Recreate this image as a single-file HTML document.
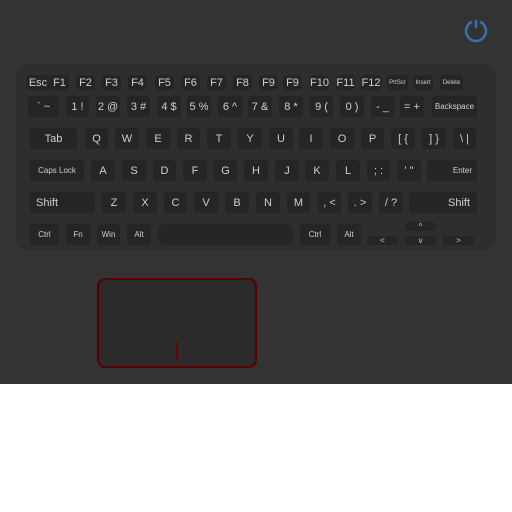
<!DOCTYPE html><html><head><style>
body{margin:0;width:512px;height:512px;background:#fff;position:relative;overflow:hidden;font-family:"Liberation Sans","DejaVu Sans",sans-serif}
#top{position:absolute;left:0;top:0;width:512px;height:384px;background:#333}
#kb{position:absolute;left:16px;top:64px;width:480px;height:186px;background:#2e2e2e;border-radius:12px}
.k{position:absolute;background:#252525;border-radius:3px;color:#cfcfcf;font-size:11px;display:flex;align-items:center;justify-content:center;white-space:nowrap;font-family:"Liberation Sans",sans-serif}
.s{font-size:8px}.xs{font-size:6px}
</style></head><body>
<div id="top"></div>
<div id="kb"></div>
<svg style="position:absolute;left:462px;top:15px" width="28" height="28"><path d="M10 6.8 A10 10 0 1 0 18 6.8" fill="none" stroke="#3a6fb0" stroke-width="2.5"/><line x1="14" y1="5" x2="14" y2="13" stroke="#3a6fb0" stroke-width="2.5"/></svg>
<div style="position:absolute;left:97px;top:278px;width:156px;height:86px;border:2px solid #5a0000;border-radius:8px;background:#2b2b2b"></div>
<div style="position:absolute;left:176px;top:342px;width:2px;height:18px;background:#6a0000"></div>

<div class="k" style="left:26px;top:75px;width:24px;height:15px">Esc</div>
<div class="k" style="left:50px;top:75px;width:19px;height:15px">F1</div>
<div class="k" style="left:76px;top:75px;width:19px;height:15px">F2</div>
<div class="k" style="left:102px;top:75px;width:19px;height:15px">F3</div>
<div class="k" style="left:128px;top:75px;width:19px;height:15px">F4</div>
<div class="k" style="left:155px;top:75px;width:19px;height:15px">F5</div>
<div class="k" style="left:181px;top:75px;width:19px;height:15px">F6</div>
<div class="k" style="left:207px;top:75px;width:19px;height:15px">F7</div>
<div class="k" style="left:233px;top:75px;width:19px;height:15px">F8</div>
<div class="k" style="left:259px;top:75px;width:19px;height:15px">F9</div>
<div class="k" style="left:283px;top:75px;width:19px;height:15px">F9</div>
<div class="k" style="left:310px;top:75px;width:19px;height:15px">F10</div>
<div class="k" style="left:336px;top:75px;width:19px;height:15px">F11</div>
<div class="k" style="left:361px;top:75px;width:20px;height:15px">F12</div>
<div class="k xs" style="left:387px;top:75px;width:21px;height:15px">PrtScr</div>
<div class="k xs" style="left:413px;top:75px;width:20px;height:15px">Insert</div>
<div class="k xs" style="left:440px;top:75px;width:23px;height:15px">Delete</div>

<div class="k" style="left:28px;top:96px;width:31px;height:21px">` ~</div>
<div class="k" style="left:66px;top:96px;width:23px;height:21px">1 !</div>
<div class="k" style="left:96px;top:96px;width:24px;height:21px">2 @</div>
<div class="k" style="left:127px;top:96px;width:23px;height:21px">3 #</div>
<div class="k" style="left:157px;top:96px;width:24px;height:21px">4 $</div>
<div class="k" style="left:187px;top:96px;width:24px;height:21px">5 %</div>
<div class="k" style="left:218px;top:96px;width:24px;height:21px">6 ^</div>
<div class="k" style="left:248px;top:96px;width:24px;height:21px">7 &amp;</div>
<div class="k" style="left:279px;top:96px;width:24px;height:21px">8 *</div>
<div class="k" style="left:310px;top:96px;width:23px;height:21px">9 (</div>
<div class="k" style="left:340px;top:96px;width:24px;height:21px">0 )</div>
<div class="k" style="left:371px;top:96px;width:23px;height:21px">- _</div>
<div class="k" style="left:400px;top:96px;width:24px;height:21px">= +</div>
<div class="k s" style="left:432px;top:96px;width:45px;height:21px">Backspace</div>

<div class="k" style="left:30px;top:128px;width:47px;height:21px">Tab</div>
<div class="k" style="left:85px;top:128px;width:23px;height:21px">Q</div>
<div class="k" style="left:115px;top:128px;width:24px;height:21px">W</div>
<div class="k" style="left:146px;top:128px;width:24px;height:21px">E</div>
<div class="k" style="left:177px;top:128px;width:23px;height:21px">R</div>
<div class="k" style="left:207px;top:128px;width:24px;height:21px">T</div>
<div class="k" style="left:238px;top:128px;width:24px;height:21px">Y</div>
<div class="k" style="left:269px;top:128px;width:24px;height:21px">U</div>
<div class="k" style="left:299px;top:128px;width:24px;height:21px">I</div>
<div class="k" style="left:330px;top:128px;width:24px;height:21px">O</div>
<div class="k" style="left:361px;top:128px;width:23px;height:21px">P</div>
<div class="k" style="left:391px;top:128px;width:24px;height:21px">[ {</div>
<div class="k" style="left:422px;top:128px;width:24px;height:21px">] }</div>
<div class="k" style="left:453px;top:128px;width:23px;height:21px">\ |</div>

<div class="k s" style="left:30px;top:160px;width:54px;height:21px">Caps Lock</div>
<div class="k" style="left:91px;top:160px;width:24px;height:21px">A</div>
<div class="k" style="left:122px;top:160px;width:24px;height:21px">S</div>
<div class="k" style="left:153px;top:160px;width:23px;height:21px">D</div>
<div class="k" style="left:183px;top:160px;width:24px;height:21px">F</div>
<div class="k" style="left:214px;top:160px;width:23px;height:21px">G</div>
<div class="k" style="left:244px;top:160px;width:24px;height:21px">H</div>
<div class="k" style="left:275px;top:160px;width:24px;height:21px">J</div>
<div class="k" style="left:305px;top:160px;width:24px;height:21px">K</div>
<div class="k" style="left:336px;top:160px;width:24px;height:21px">L</div>
<div class="k" style="left:367px;top:160px;width:23px;height:21px">; :</div>
<div class="k" style="left:397px;top:160px;width:24px;height:21px">' "</div>
<div class="k s" style="left:427px;top:160px;width:50px;height:21px;justify-content:flex-end;padding-right:5px;box-sizing:border-box">Enter</div>

<div class="k" style="left:30px;top:192px;width:65px;height:21px;justify-content:flex-start;padding-left:6px;box-sizing:border-box">Shift</div>
<div class="k" style="left:102px;top:192px;width:24px;height:21px">Z</div>
<div class="k" style="left:133px;top:192px;width:24px;height:21px">X</div>
<div class="k" style="left:164px;top:192px;width:23px;height:21px">C</div>
<div class="k" style="left:194px;top:192px;width:24px;height:21px">V</div>
<div class="k" style="left:225px;top:192px;width:24px;height:21px">B</div>
<div class="k" style="left:256px;top:192px;width:24px;height:21px">N</div>
<div class="k" style="left:287px;top:192px;width:23px;height:21px">M</div>
<div class="k" style="left:318px;top:192px;width:23px;height:21px">, &lt;</div>
<div class="k" style="left:348px;top:192px;width:24px;height:21px">. &gt;</div>
<div class="k" style="left:379px;top:192px;width:24px;height:21px">/ ?</div>
<div class="k" style="left:409px;top:192px;width:68px;height:21px;justify-content:flex-end;padding-right:7px;box-sizing:border-box">Shift</div>

<div class="k s" style="left:30px;top:224px;width:29px;height:21px">Ctrl</div>
<div class="k s" style="left:66px;top:224px;width:24px;height:21px">Fn</div>
<div class="k s" style="left:97px;top:224px;width:23px;height:21px">Win</div>
<div class="k s" style="left:127px;top:224px;width:24px;height:21px">Alt</div>
<div class="k" style="left:158px;top:224px;width:135px;height:21px;border-radius:8px"></div>
<div class="k s" style="left:300px;top:224px;width:30px;height:21px">Ctrl</div>
<div class="k s" style="left:337px;top:224px;width:24px;height:21px">Alt</div>
<div class="k s" style="left:405px;top:222px;width:31px;height:9px">^</div>
<div class="k s" style="left:367px;top:236px;width:31px;height:9px">&lt;</div>
<div class="k s" style="left:405px;top:236px;width:31px;height:9px">v</div>
<div class="k s" style="left:443px;top:236px;width:31px;height:9px">&gt;</div>
</body></html>
